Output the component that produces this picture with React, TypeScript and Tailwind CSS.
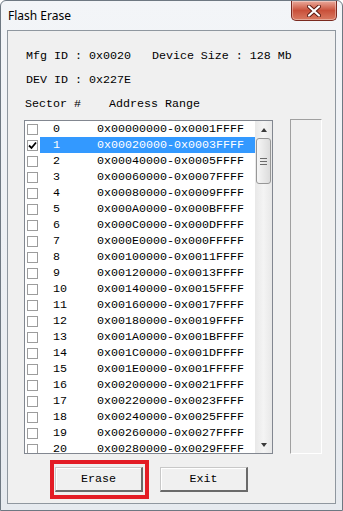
import React from 'react';

const hex = (n: number) => '0x' + n.toString(16).toUpperCase().padStart(8, '0');

// 21 visible sectors, 128 KB each
const sectors = Array.from({ length: 21 }, (_, i) => ({
  id: i,
  range: `${hex(i * 0x20000)}-${hex(i * 0x20000 + 0x1ffff)}`,
}));

const mono = "font-['Liberation_Mono','Courier_New',monospace] text-[11.67px] leading-[16px] text-black";

function CloseButton() {
  return (
    <div className="w-[46px] h-[20px] rounded-b-[5px] border border-t-0 border-[#7a2a20] bg-gradient-to-b from-[#e9a99b] via-[#c9503a] to-[#d97a62] flex items-center justify-center shadow-[inset_0_0_0_1px_rgba(255,255,255,0.35)]">
      <svg width="14" height="12" viewBox="0 0 14 12">
        <path d="M2 1.5 L12 10.5 M12 1.5 L2 10.5" stroke="#5a1a12" strokeWidth="4" strokeLinecap="round" />
        <path d="M2 1.5 L12 10.5 M12 1.5 L2 10.5" stroke="#ffffff" strokeWidth="2.2" strokeLinecap="round" />
      </svg>
    </div>
  );
}

function Checkbox({ checked }: { checked: boolean }) {
  return (
    <div className="w-[11px] h-[11px] border border-[#9c9c9c] bg-white flex items-center justify-center">
      {checked && (
        <svg width="9" height="9" viewBox="0 0 9 9">
          <path d="M1 4.5 L3.5 7 L8 1.5" stroke="#000" strokeWidth="1.8" fill="none" />
        </svg>
      )}
    </div>
  );
}

function ScrollBar() {
  return (
    <div className="w-[17px] h-full bg-gradient-to-r from-[#e8e8e8] via-[#f4f4f4] to-[#e8e8e8] flex flex-col">
      <div className="h-[17px] flex items-center justify-center">
        <div className="w-0 h-0 border-l-[3.5px] border-r-[3.5px] border-b-[4px] border-l-transparent border-r-transparent border-b-[#3a3a3a]" />
      </div>
      <div className="mx-[1px] h-[46px] rounded-[3px] border border-[#979797] bg-gradient-to-r from-[#f6f6f6] to-[#dcdcdc] flex flex-col items-center justify-center gap-[2px]">
        <div className="w-[7px] h-px bg-[#6b6b6b]" />
        <div className="w-[7px] h-px bg-[#6b6b6b]" />
        <div className="w-[7px] h-px bg-[#6b6b6b]" />
      </div>
      <div className="flex-1" />
      <div className="h-[17px] flex items-center justify-center">
        <div className="w-0 h-0 border-l-[3.5px] border-r-[3.5px] border-t-[4px] border-l-transparent border-r-transparent border-t-[#3a3a3a]" />
      </div>
    </div>
  );
}

function Button({ label }: { label: string }) {
  return (
    <button className={`w-[88px] h-[25px] bg-[#f0f0f0] border-t border-l border-[#c8c8c8] border-r-2 border-b-2 border-r-[#6a6a6a] border-b-[#6a6a6a] shadow-[inset_1px_1px_0_#ffffff] flex items-center justify-center ${mono}`}>
      {label}
    </button>
  );
}

export default function App() {
  return (
    <div className="w-[343px] h-[511px] flex flex-col bg-gradient-to-b from-[#f3f5f8] to-[#e6eaef] border border-[#6e7882] rounded-t-[6px] overflow-hidden">
      {/* Title bar */}
      <div className="h-[29px] flex justify-between pl-[7px] pr-[5px] shrink-0">
        <div className="h-[29px] flex items-center font-['Noto_Sans',sans-serif] text-[12px] text-black">
          Flash Erase
        </div>
        <CloseButton />
      </div>

      {/* Client area */}
      <div className="flex-1 px-[6px] pb-[6px] flex flex-col">
        <div className="flex-1 border border-[#8f979f] bg-[#f0f0f0] flex flex-col pt-[17px]">
          <div className={`pl-[18px] whitespace-pre ${mono}`}>Mfg ID : 0x0020   Device Size : 128 Mb</div>
          <div className={`pl-[18px] mt-[8px] whitespace-pre ${mono}`}>DEV ID : 0x227E</div>
          <div className={`pl-[17px] mt-[8px] whitespace-pre ${mono}`}>Sector #    Address Range</div>

          <div className="mt-[7px] pl-[16px] flex items-end gap-[17px]">
            {/* Sector list */}
            <div className="w-[249px] h-[334px] border border-[#828790] bg-white flex overflow-hidden">
              <div className="flex-1 overflow-hidden">
                {sectors.map((s) => {
                  const selected = s.id === 1;
                  return (
                    <div key={s.id} className="h-[16px] flex items-center shrink-0">
                      <div className="w-[15px] pl-[2px] flex items-center">
                        <Checkbox checked={selected} />
                      </div>
                      <div
                        className={`flex-1 h-[16px] flex items-center pl-[13px] whitespace-pre ${mono} ${
                          selected ? 'bg-[#3399ff] text-white' : ''
                        }`}
                      >
                        <span className="w-[44px]">{s.id}</span>
                        <span>{s.range}</span>
                      </div>
                    </div>
                  );
                })}
              </div>
              <ScrollBar />
            </div>

            {/* Empty side box */}
            <div className="w-[32px] h-[335px] border-t border-l border-[#a0a0a0] border-r border-b border-r-white border-b-white" />
          </div>

          <div className="mt-[13px] pl-[47px] flex gap-[17px]">
            <div className="relative">
              <Button label="Erase" />
              <span className="absolute -left-[5px] -right-[6px] -top-[7px] -bottom-[7px] border-4 border-[#e31c25] pointer-events-none" />
            </div>
            <Button label="Exit" />
          </div>
        </div>
      </div>
    </div>
  );
}
